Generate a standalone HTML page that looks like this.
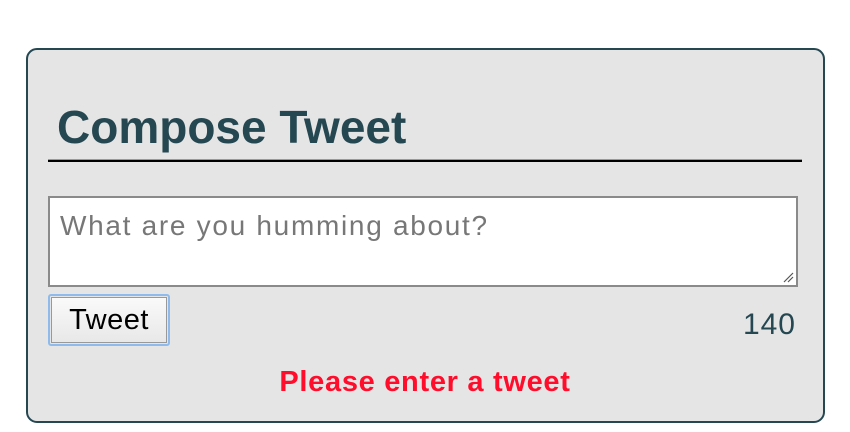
<!DOCTYPE html>
<html><head><style>
body{margin:0;width:850px;height:432px;background:#fff;font-family:"Liberation Sans",sans-serif;position:relative;overflow:hidden}
.box{position:absolute;left:26px;top:48px;width:795px;height:371px;border:2px solid #244751;border-radius:11px;background:#e5e5e5}
h1{position:absolute;left:29px;top:50px;margin:0;font-size:46px;font-weight:bold;color:#244751;letter-spacing:0}
.hr{position:absolute;left:20px;top:109px;width:754px;height:1px;background:#999;border-bottom:2px solid #000}
.ta{position:absolute;left:20px;top:146px;width:746px;height:87px;border:2px solid #8a8a8a;background:#fff}
.ta span{position:absolute;left:10px;top:12px;font-size:28px;color:#777;letter-spacing:1.7px}
.rs{position:absolute;right:2px;bottom:2px}
.btn{position:absolute;left:20px;top:244px;width:122px;height:52px;border:2px solid #8fbbec;border-radius:3px;box-sizing:border-box}
.btn div{position:absolute;inset:1px;border:1px solid #999;background:linear-gradient(#fafafa,#e8e8e8);font-size:29px;letter-spacing:0.5px;text-align:center;line-height:44px;color:#000}
.cnt{position:absolute;right:27px;top:258px;font-size:30px;letter-spacing:1px;color:#244751}
.err{position:absolute;left:0;width:794px;top:316px;text-align:center;font-size:29px;font-weight:bold;color:#ff0d2b;letter-spacing:0.7px}
</style></head><body>
<div class="box">
<h1>Compose Tweet</h1>
<div class="hr"></div>
<div class="ta"><span>What are you humming about?</span>
<svg class="rs" width="12" height="12"><path d="M2 11L11 2M6 11L11 6" stroke="#555" stroke-width="1.2"/></svg></div>
<div class="btn"><div>Tweet</div></div>
<div class="cnt">140</div>
<div class="err">Please enter a tweet</div>
</div>
</body></html>
